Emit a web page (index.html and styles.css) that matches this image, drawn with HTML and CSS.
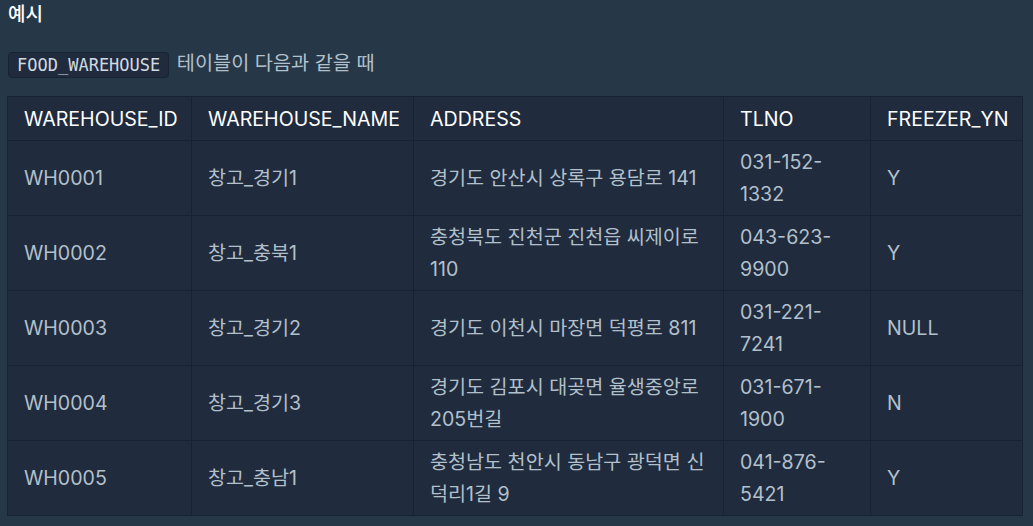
FILE: index.html
```html
<!DOCTYPE html>
<html lang="ko">
<head>
<meta charset="utf-8">
<title>예시</title>
<link rel="stylesheet" href="styles.css">
</head>
<body>
<div class="page">
  <h5 class="title">예시</h5>
  <p class="desc"><code class="code">FOOD_WAREHOUSE</code> 테이블이 다음과 같을 때</p>
  <table class="grid">
    <colgroup>
      <col class="c-id">
      <col class="c-name">
      <col class="c-addr">
      <col class="c-tel">
      <col class="c-frz">
    </colgroup>
    <thead>
      <tr><th>WAREHOUSE_ID</th><th>WAREHOUSE_NAME</th><th>ADDRESS</th><th>TLNO</th><th>FREEZER_YN</th></tr>
    </thead>
    <tbody>
      <tr><td>WH0001</td><td>창고_경기1</td><td>경기도 안산시 상록구 용담로 141</td><td>031-152-1332</td><td>Y</td></tr>
      <tr><td>WH0002</td><td>창고_충북1</td><td>충청북도 진천군 진천읍 씨제이로 110</td><td>043-623-9900</td><td>Y</td></tr>
      <tr><td>WH0003</td><td>창고_경기2</td><td>경기도 이천시 마장면 덕평로 811</td><td>031-221-7241</td><td>NULL</td></tr>
      <tr><td>WH0004</td><td>창고_경기3</td><td>경기도 김포시 대곶면 율생중앙로 205번길</td><td>031-671-1900</td><td>N</td></tr>
      <tr><td>WH0005</td><td>창고_충남1</td><td>충청남도 천안시 동남구 광덕면 신덕리1길 9</td><td>041-876-5421</td><td>Y</td></tr>
    </tbody>
  </table>
</div>
</body>
</html>
```

FILE: styles.css
```css
html, body {
  margin: 0;
  background: #263747;
}
body {
  font-family: Inter, "Noto Sans CJK KR", sans-serif;
}
.page {
  padding: 1px 0 0 7px;
}
.title {
  margin: 0 0 0 1px;
  font-size: 19px;
  line-height: 28px;
  font-weight: 500;
  color: #ffffff;
}
.desc {
  margin: 18px 0 17px 1px;
  font-size: 19.7px;
  line-height: 32px;
  color: #b2c0cc;
}
.code {
  display: inline-block;
  font-family: "DejaVu Sans Mono", monospace;
  font-size: 17px;
  line-height: 20px;
  padding: 2px 8px;
  margin-right: 2px;
  background: #202b3d;
  border: 1px solid #172334;
  border-radius: 4px;
  color: #d2dae2;
  vertical-align: middle;
}
.grid {
  border-collapse: collapse;
  table-layout: fixed;
  width: 1015px;
  background: #202b3d;
  font-size: 19.6px;
  line-height: 32px;
}
.c-id { width: 184px; }
.c-name { width: 222px; }
.c-addr { width: 310px; }
.c-tel { width: 147px; }
.c-frz { width: 152px; }
.grid th,
.grid td {
  border: 1px solid #172334;
  padding: 5px 16px;
  text-align: left;
  vertical-align: middle;
}
.grid th {
  padding-top: 6px;
  color: #ffffff;
  font-weight: 400;
}
.grid td {
  color: #b2c0cc;
}
```
